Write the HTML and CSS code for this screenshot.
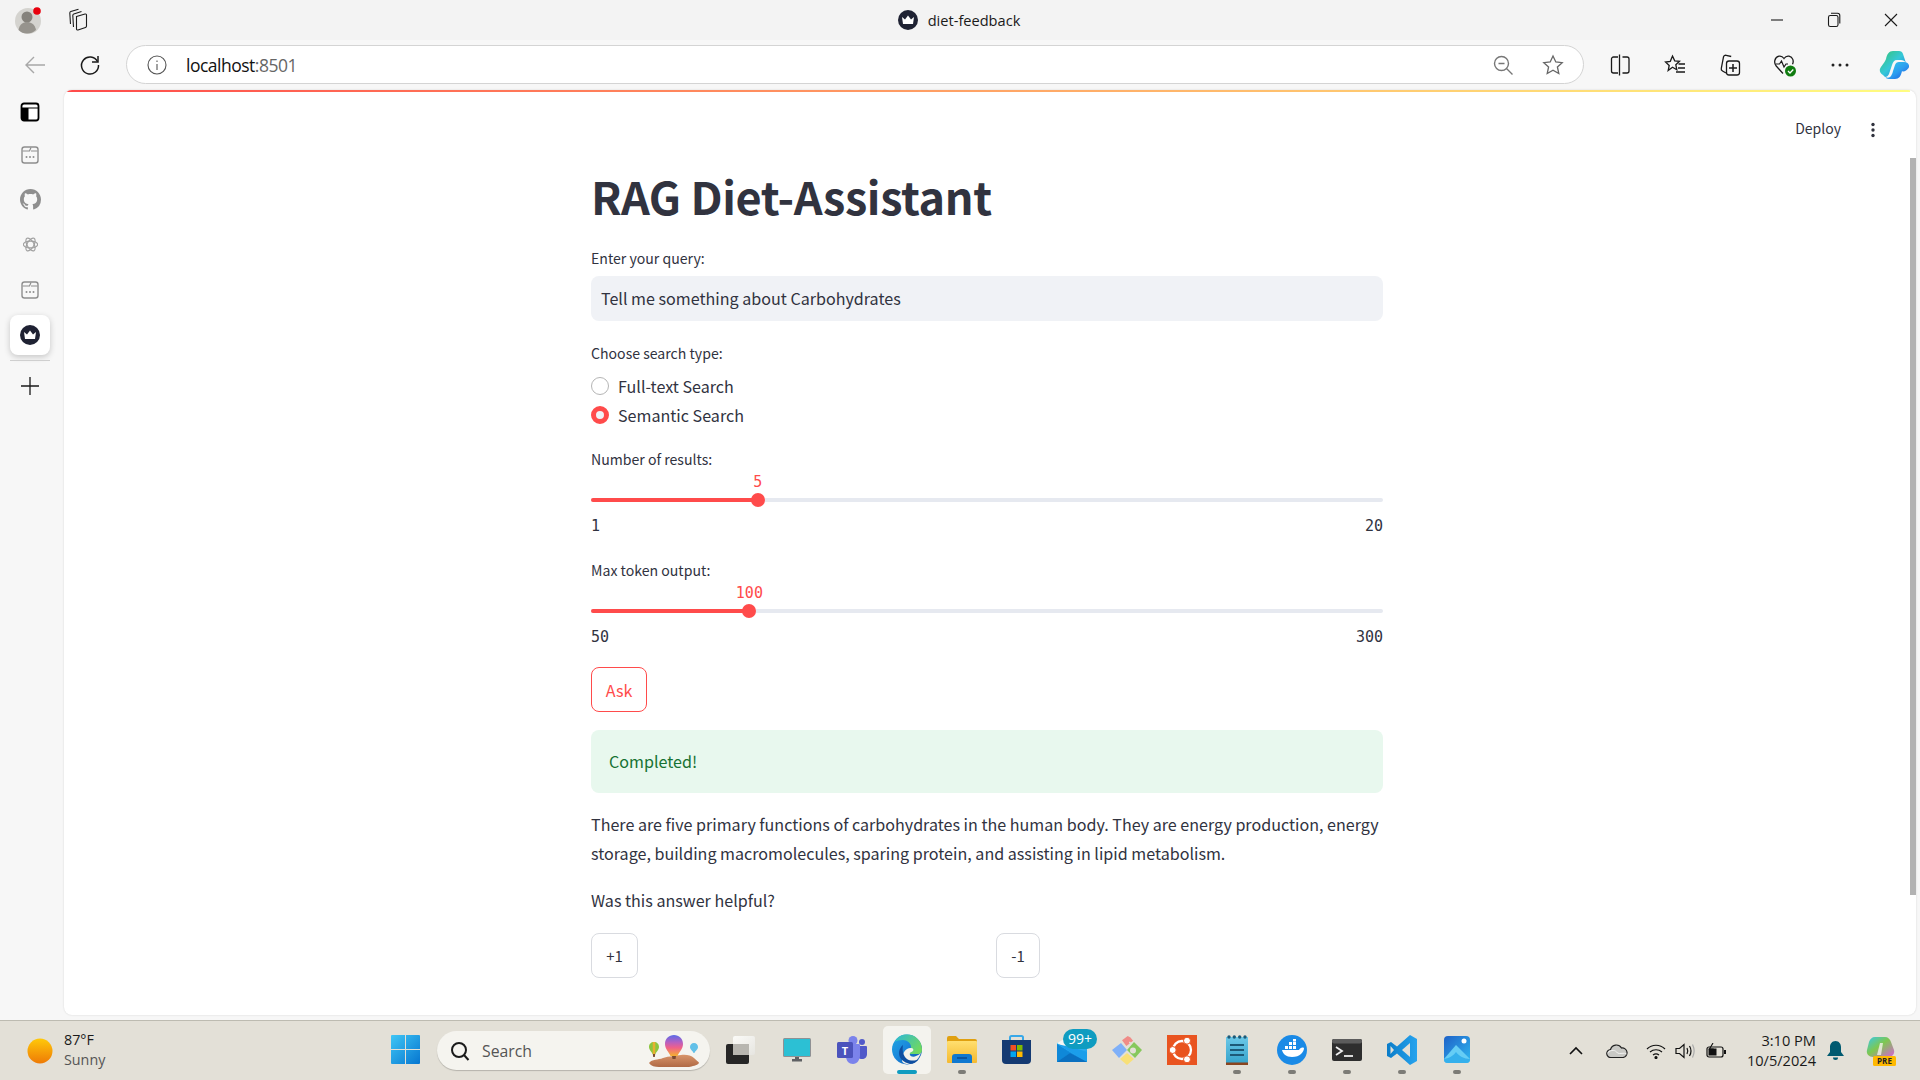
FILE: index.html
```html
<!DOCTYPE html>
<html lang="en">
<head>
<meta charset="utf-8">
<title>diet-feedback</title>
<link rel="stylesheet" href="styles.css">
</head>
<body>
<svg class="defs" width="0" height="0" aria-hidden="true">
  <defs>
    <linearGradient id="gCop" x1="0" y1="0" x2="1" y2="1"><stop offset="0" stop-color="#2fd0e8"/><stop offset=".55" stop-color="#2b9cf0"/><stop offset="1" stop-color="#1b50d8"/></linearGradient>
    <linearGradient id="gCop2" x1="0" y1="0" x2="1" y2="1"><stop offset="0" stop-color="#35c46e"/><stop offset=".5" stop-color="#35c8d8"/><stop offset="1" stop-color="#1d6fe0"/></linearGradient>
    <linearGradient id="gSun" x1="0" y1="0" x2="0" y2="1"><stop offset="0" stop-color="#ffc90a"/><stop offset="1" stop-color="#ee7a06"/></linearGradient>
    <linearGradient id="gWin" x1="0" y1="0" x2="1" y2="1"><stop offset="0" stop-color="#3fc6f5"/><stop offset="1" stop-color="#0676d0"/></linearGradient>
    <linearGradient id="gEdge" x1="0" y1="0" x2="1" y2="1"><stop offset="0" stop-color="#22a8e0"/><stop offset=".45" stop-color="#1a88dc"/><stop offset="1" stop-color="#0c4fa8"/></linearGradient>
    <linearGradient id="gEdge2" x1="0" y1="0" x2="1" y2=".6"><stop offset="0" stop-color="#2cb8d8"/><stop offset="1" stop-color="#6fd860"/></linearGradient>
    <linearGradient id="gFolder" x1="0" y1="0" x2="0" y2="1"><stop offset="0" stop-color="#ffdf70"/><stop offset="1" stop-color="#f5b92f"/></linearGradient>
    <linearGradient id="gMail" x1="0" y1="0" x2="1" y2="1"><stop offset="0" stop-color="#4fd0f8"/><stop offset="1" stop-color="#1a9ae8"/></linearGradient>
    <linearGradient id="gVs" x1="0" y1="0" x2="1" y2="0"><stop offset="0" stop-color="#0a7cc8"/><stop offset="1" stop-color="#27a3ee"/></linearGradient>
    <linearGradient id="gPhoto" x1="0" y1="0" x2="1" y2="1"><stop offset="0" stop-color="#1f62c8"/><stop offset="1" stop-color="#2fb8f0"/></linearGradient>
    <linearGradient id="gPre" x1="0" y1="0" x2="1" y2="1"><stop offset="0" stop-color="#38c8e8"/><stop offset=".45" stop-color="#7ec850"/><stop offset="1" stop-color="#d860d8"/></linearGradient>
    <linearGradient id="gBalloon" x1="0" y1="0" x2="0" y2="1"><stop offset="0" stop-color="#5a6ce8"/><stop offset=".35" stop-color="#b860c0"/><stop offset=".6" stop-color="#f0608a"/><stop offset="1" stop-color="#f4b030"/></linearGradient>
    <linearGradient id="gRock" x1="0" y1="0" x2="0" y2="1"><stop offset="0" stop-color="#d8946a"/><stop offset="1" stop-color="#b06a45"/></linearGradient>
    <linearGradient id="gFront" x1="0" y1="0" x2="1" y2="1"><stop offset="0" stop-color="#fbfbf8"/><stop offset="1" stop-color="#e6e5e0"/></linearGradient>
    <linearGradient id="gNotes" x1="0" y1="0" x2="0" y2="1"><stop offset="0" stop-color="#6cc8e8"/><stop offset="1" stop-color="#36a4cc"/></linearGradient>
    <symbol id="folderTab" viewBox="0 0 20 20"><rect x="2" y="2" width="16" height="16" rx="2.5" fill="none" stroke="#8e8e8e" stroke-width="1.4"/><path d="M2.5 6h7l1.500-3.500M11 6h6.500" fill="none" stroke="#8e8e8e" stroke-width="1.2"/><circle cx="6.500" cy="12" r="1" fill="#8e8e8e"/><circle cx="10" cy="12" r="1" fill="#8e8e8e"/><circle cx="13.500" cy="12" r="1" fill="#8e8e8e"/></symbol>
    <symbol id="crown" viewBox="0 0 20 20"><circle cx="10" cy="10" r="10" fill="#1f2233"/><path d="M4 7l3 2.500L10 5.500l3 4 3-2.500-1 7H5z" fill="#fff"/></symbol>
  </defs>
</svg>

<header class="titlebar">
  <div class="title-left">
    <svg width="26" height="28" viewBox="0 0 26 28"><circle cx="13" cy="15" r="13" fill="#d4d3cf"/><circle cx="12" cy="11" r="5.500" fill="#85827c"/><path d="M3.500 24c1-6 5-8 8.500-8s8 2 9 8c-2.500 2.500-5.500 3.500-9 3.500s-6-1-8.500-3.500z" fill="#96938d"/><circle cx="22" cy="5" r="3.800" fill="#e8000d"/></svg>
    <svg class="tabs-icon" width="22" height="24" viewBox="0 0 22 24" fill="none" stroke="#1c1c1c" stroke-width="1.100"><path d="M10.500 8.500 19 6c.8-.2 1.500.3 1.500 1.100V18c0 .7-.4 1.200-1 1.400L12 22c-.8.200-1.500-.3-1.500-1.100z"/><path d="M7.500 19 6.800 7.500c0-.7.4-1.200 1-1.400L15.500 3.500"/><path d="M4.500 16 3.800 5c0-.7.400-1.200 1-1.400L12.500 1.200"/></svg>
  </div>
  <div class="title-center">
    <svg width="20" height="20"><use href="#crown"/></svg>
    <span>diet-feedback</span>
  </div>
  <div class="window-ctl">
    <svg width="14" height="14" viewBox="0 0 14 14"><path d="M1 7h12" stroke="#1a1a1a" stroke-width="1.100"/></svg>
    <svg width="14" height="16" viewBox="0 0 14 16" fill="none" stroke="#1a1a1a" stroke-width="1.100"><rect x="1.500" y="3.500" width="9.500" height="11" rx="1.800"/><path d="M4 1.300h6.500c1.500 0 2.300.8 2.300 2.300v8"/></svg>
    <svg width="14" height="14" viewBox="0 0 14 14"><path d="M1 1l12 12M13 1 1 13" stroke="#1a1a1a" stroke-width="1.100"/></svg>
  </div>
</header>

<nav class="toolbar">
  <svg class="tb-back" width="22" height="20" viewBox="0 0 22 20" fill="none" stroke="#a8a8a8" stroke-width="1.400"><path d="M21 10H2M10 2l-8 8 8 8"/></svg>
  <svg class="tb-reload" width="22" height="22" viewBox="0 0 22 22" fill="none" stroke="#1a1a1a" stroke-width="1.500"><path d="M18.500 7.500A8.500 8.500 0 1 0 19.500 11"/><path d="M19 2v6h-6"/></svg>
  <div class="address">
    <svg width="20" height="20" viewBox="0 0 20 20" fill="none" stroke="#555" stroke-width="1.100"><circle cx="10" cy="10" r="9"/><path d="M10 9v6M10 5.500v1.500"/></svg>
    <span class="url"><span class="url-host">localhost</span>:8501</span>
    <svg class="addr-zoom" width="20" height="20" viewBox="0 0 20 20" fill="none" stroke="#777" stroke-width="1.400"><circle cx="8.500" cy="8.500" r="7"/><path d="M5.500 8.500h6M13.500 13.500l6 6"/></svg>
    <svg class="addr-star" width="22" height="22" viewBox="0 0 22 22" fill="none" stroke="#666" stroke-width="1.300"><path d="m11 2 2.800 6 6.400.7-4.800 4.300 1.400 6.500L11 16.200 5.200 19.500 6.600 13 1.800 8.700 8.200 8z"/></svg>
  </div>
  <div class="tb-icons">
    <span class="tb-slot"><svg width="20" height="22" viewBox="0 0 20 22" fill="none" stroke="#1a1a1a" stroke-width="1.300"><path d="M8 3H3.500A2 2 0 0 0 1.500 5v12a2 2 0 0 0 2 2H8M12.500 3H17a2 2 0 0 1 2 2v12a2 2 0 0 1-2 2h-4.500"/><path d="M9.500.5v21"/></svg></span>
    <span class="tb-slot"><svg width="22" height="22" viewBox="0 0 22 22" fill="none" stroke="#1a1a1a" stroke-width="1.300"><path d="m8.500 2 2.200 4.800 4.800.5-3.700 3.400 1 5-4.300-2.500L4.200 16.500l1-5L1.500 8l4.800-.7z"/><path d="M14.500 10H21M14 14h7M12 18h9"/></svg></span>
    <span class="tb-slot"><svg width="22" height="24" viewBox="0 0 22 24" fill="none" stroke="#1a1a1a" stroke-width="1.300"><path d="M7 20 3.500 18c-1-.6-1.500-1.600-1.200-2.700L4.500 4c.3-1.300 1.500-2 2.700-1.700l5 1.200"/><rect x="7.500" y="8" width="13" height="14" rx="2.500"/><path d="M14 11v8M10 15h8" stroke-width="1.500"/></svg></span>
    <span class="tb-slot"><svg width="24" height="24" viewBox="0 0 24 24" fill="none"><path d="M10 20.500 3.200 13C.5 10 1.500 4 6 3.200 8 2.800 9.800 3.800 11 5.500c1.200-1.700 3-2.700 5-2.300 4 .8 5 5 3.500 8" stroke="#1a1a1a" stroke-width="1.300"/><path d="M2.500 11h4l2-3 2.500 6 2-3h2" stroke="#1a1a1a" stroke-width="1.200"/><circle cx="17.500" cy="18" r="5.500" fill="#107c10"/><path d="m15 18 2 2 3.300-3.500" stroke="#fff" stroke-width="1.300"/></svg></span>
    <span class="tb-slot"><svg width="18" height="4" viewBox="0 0 18 4" fill="#222"><circle cx="2" cy="2" r="1.500"/><circle cx="9" cy="2" r="1.500"/><circle cx="16" cy="2" r="1.500"/></svg></span>
    <span class="tb-slot tb-slot-last"><svg width="30" height="28" viewBox="0 0 30 28"><path d="M7 8C8 3 10 0 14 0h6c2 0 3.500 1 4 3l3 9c-1-2-3-3-5-3h-4c-3 0-4 2-5 5l-3 9c-1 2-2 3-4 3L4 24C2 23 .5 21 .8 18.500 2 15 5 13 7 8z" fill="url(#gCop2)"/><path d="M23 20c-1 5-3 8-7 8h-6c-2 0-3-.8-3.500-2 2 1 4 1 5.500-1 1-1.500 1.500-3 2-5l2-6c.7-2 2-3 4-3h5c3 0 4.500 1.500 5 3.500.5 2-1 3.500-3 5-1.500 1-3 1.500-4 .5z" fill="url(#gCop)"/></svg></span>
  </div>
</nav>

<div class="middle">
  <aside class="sidebar">
    <span class="side-item side-first"><svg width="20" height="20" viewBox="0 0 20 20"><rect x="1.500" y="1.500" width="17" height="17" rx="2.500" fill="#fff" stroke="#000" stroke-width="1.800"/><path d="M2 5.500h16v1H2zM2 6h6.500v12H2z" fill="#000"/></svg></span>
    <span class="side-item"><svg width="20" height="20"><use href="#folderTab"/></svg></span>
    <span class="side-item"><svg width="21" height="21" viewBox="0 0 16 16"><path fill="#8f8f8f" d="M8 0C3.580 0 0 3.580 0 8c0 3.540 2.290 6.530 5.470 7.590.4.070.55-.17.55-.38v-1.340c-2.230.48-2.700-1.070-2.700-1.070-.36-.92-.89-1.170-.89-1.170-.73-.5.050-.49.050-.49.800.060 1.220.820 1.220.820.710 1.220 1.870.87 2.330.660.070-.52.280-.87.510-1.070-1.780-.2-3.640-.890-3.640-3.950 0-.870.310-1.590.820-2.150-.080-.2-.360-1.020.080-2.120 0 0 .670-.210 2.200.820.640-.180 1.320-.270 2-.270s1.360.090 2 .270c1.530-1.040 2.200-.820 2.200-.820.440 1.100.160 1.920.080 2.120.510.560.820 1.270.820 2.150 0 3.070-1.870 3.750-3.650 3.950.290.250.540.730.540 1.480v2.200c0 .210.150.460.550.380A8.010 8.010 0 0 0 16 8c0-4.420-3.580-8-8-8z"/></svg></span>
    <span class="side-item"><svg width="15" height="15" viewBox="0 0 20 20" fill="none" stroke="#a0a0a0" stroke-width="1.500"><ellipse cx="10" cy="10" rx="9.500" ry="4.500"/><ellipse cx="10" cy="10" rx="9.500" ry="4.500" transform="rotate(60 10 10)"/><ellipse cx="10" cy="10" rx="9.500" ry="4.500" transform="rotate(120 10 10)"/></svg></span>
    <span class="side-item"><svg width="20" height="20"><use href="#folderTab"/></svg></span>
    <span class="side-item side-active"><svg width="20" height="20"><use href="#crown"/></svg></span>
    <span class="side-divider"></span>
    <span class="side-plus"><svg width="20" height="20" viewBox="0 0 20 20"><path d="M10 1v18M1 10h18" stroke="#1a1a1a" stroke-width="1.300"/></svg></span>
  </aside>

  <main class="page">
    <div class="decoration"></div>
    <div class="app-header">
      <span class="deploy">Deploy</span>
      <svg class="app-menu" width="4" height="16" viewBox="0 0 4 16" fill="#31333f"><circle cx="2" cy="2.500" r="1.700"/><circle cx="2" cy="8" r="1.700"/><circle cx="2" cy="13.500" r="1.700"/></svg>
    </div>
    <div class="scrollbar"></div>
    <div class="content">
      <h1 class="app-title">RAG Diet-Assistant</h1>

      <div class="label label-first">Enter your query:</div>
      <div class="text-input">Tell me something about Carbohydrates</div>

      <div class="label label-choose">Choose search type:</div>
      <div class="radios">
        <div class="radio"><span class="radio-dot"></span>Full-text Search</div>
        <div class="radio"><span class="radio-dot radio-on"></span>Semantic Search</div>
      </div>

      <div class="label label-num">Number of results:</div>
      <div class="slider">
        <div class="slider-value" style="left:21.05%">5</div>
        <div class="slider-track"><div class="slider-fill" style="width:21.05%"></div><div class="slider-thumb" style="left:21.05%"></div></div>
        <div class="slider-range"><span>1</span><span>20</span></div>
      </div>

      <div class="label label-max">Max token output:</div>
      <div class="slider">
        <div class="slider-value" style="left:20%">100</div>
        <div class="slider-track"><div class="slider-fill" style="width:20%"></div><div class="slider-thumb" style="left:20%"></div></div>
        <div class="slider-range"><span>50</span><span>300</span></div>
      </div>

      <button class="btn-ask">Ask</button>
      <div class="alert">Completed!</div>
      <p class="answer">There are five primary functions of carbohydrates in the human body. They are energy production, energy storage, building macromolecules, sparing protein, and assisting in lipid metabolism.</p>
      <p class="helpful">Was this answer helpful?</p>
      <div class="feedback">
        <div><button class="btn-fb btn-plus">+1</button></div>
        <div><button class="btn-fb btn-minus">-1</button></div>
      </div>
    </div>
  </main>
</div>

<footer class="taskbar">
  <div class="weather">
    <svg width="26" height="26" viewBox="0 0 26 26"><circle cx="13" cy="13" r="12.500" fill="url(#gSun)"/></svg>
    <div class="weather-text"><div class="w-temp">87°F</div><div class="w-desc">Sunny</div></div>
  </div>
  <span class="slot slot-start"><svg width="29" height="29" viewBox="0 0 29 29"><path d="M0 1a1 1 0 0 1 1-1h13v14H0zM15 0h13a1 1 0 0 1 1 1v13H15zM0 15h14v14H1a1 1 0 0 1-1-1zM15 15h14v13a1 1 0 0 1-1 1H15z" fill="url(#gWin)"/></svg></span>
  <div class="search">
    <svg width="20" height="20" viewBox="0 0 20 20" fill="none" stroke="#1a1a1a" stroke-width="2"><circle cx="9" cy="9" r="7"/><path d="m14 14 4.500 5"/></svg>
    <span class="search-text">Search</span>
    <svg class="balloons" width="54" height="33" viewBox="0 0 54 33">
      <path d="M2 29c3-4 9-3 14-5 6-2 12-2 18-3 5-.5 10 0 13 3 2 2 5 4 5 5-2 3-7 3-10 4H12C8 33 4 32 2 29z" fill="url(#gRock)"/>
      <path d="M27 1c5 0 9 3.500 9 9 0 5-4 8-5.500 12h-7C22 18 18 15 18 10c0-5.500 4-9 9-9z" fill="url(#gBalloon)"/>
      <path d="M25 22h4l-.5 3h-3z" fill="#7a4a30"/>
      <path d="M7 8c3 0 5 2 5 5 0 3-3 5-3.500 7h-3C5 18 2 16 2 13c0-3 2-5 5-5z" fill="#8cc63f"/>
      <path d="M7 8v12" stroke="#e8b030" stroke-width="2.500"/>
      <path d="M5.800 20h2.400l-.4 3H6.200z" fill="#7a4a30"/>
      <path d="M47 9c2.500 0 4 2 4 4 0 2.500-3 4-3.500 6h-1c-.5-2-3.500-3.500-3.500-6 0-2 1.500-4 4-4z" fill="#62c0e8"/>
    </svg>
  </div>
  <span class="slot slot-task"><svg width="29" height="28" viewBox="0 0 29 28"><rect y="8" width="23" height="20" rx="2" fill="#262626"/><rect x="7" width="22" height="19" rx="2" fill="url(#gFront)"/><rect x="7" y="8" width="16" height="11" fill="#b8b6b0"/></svg></span>
  <span class="slot"><svg width="28" height="24" viewBox="0 0 28 24"><rect width="28" height="19" rx="1.500" fill="#8f9194"/><rect x="1" y="1" width="26" height="17" fill="#2cc0d4"/><path d="M12 19h4v2h-4zM9 21h10v2.500H9z" fill="#5f6164"/></svg></span>
  <span class="slot"><svg width="30" height="28" viewBox="0 0 30 28"><circle cx="25" cy="6" r="3" fill="#5059c9"/><path d="M20 10h9a1 1 0 0 1 1 1v7c0 3-2 5-5 5s-5-2-5-5z" fill="#5059c9"/><circle cx="16" cy="4.500" r="4.500" fill="#7b83eb"/><path d="M9 8h13a1 1 0 0 1 1 1v10c0 5-3 9-7 9s-7-3-7-8z" fill="#7b83eb"/><rect y="6" width="16" height="16" rx="1.500" fill="#4b53bc"/><text class="teams-t" x="8" y="18.500" text-anchor="middle">T</text></svg></span>
  <span class="slot slot-active"><svg width="30" height="31" viewBox="0 0 30 31"><circle cx="15" cy="15.500" r="15" fill="url(#gEdge)"/><path d="M3 7C6 2 10 .5 15 .5c8 0 15 6 15 15 0 3-1 4-3 4.500H16c-1-3 3-4 3-7 0-4-4-7-8-7-4 0-6 1-8 1.500z" fill="url(#gEdge2)"/><path d="M29 19c-3 7-7 11-13 11-4 0-5-1-6-3 .5-7 2-12 8-13 3-.5 4 1 3 3-1 1-4 1-3 4 1 2 5 3 11-2z" fill="#f3f1ea"/><path d="M11 11c-4 3-6 10-1 15 2 2 5 3 8 4 3 0 7-2 9-5-4 2-9 2-12 0-4-3-5-9-4-14z" fill="#0e4ea0"/></svg><i class="run run-blue"></i></span>
  <span class="slot"><svg width="30" height="27" viewBox="0 0 30 27"><path d="M0 2a2 2 0 0 1 2-2h7l3 3h16a2 2 0 0 1 2 2v3H0z" fill="#e0a010"/><rect y="5" width="30" height="22" rx="1" fill="url(#gFolder)"/><path d="M5 27v-6a3 3 0 0 1 3-3h14a3 3 0 0 1 3 3v6z" fill="#0f78d0"/><path d="M10 22h10" stroke="#0a4a90" stroke-width="1.500"/></svg><i class="run"></i></span>
  <span class="slot"><svg width="29" height="29" viewBox="0 0 29 29"><path d="M8 6V2.500A1.500 1.500 0 0 1 9.500 1h10A1.500 1.500 0 0 1 21 2.500V6" fill="none" stroke="#38a8e8" stroke-width="2"/><path d="M0 5h29v20a4 4 0 0 1-4 4H4a4 4 0 0 1-4-4z" fill="#143a72"/><path d="M8.500 10h5.500v5.500H8.500z" fill="#f25022"/><path d="M15 10h5.500v5.500H15z" fill="#7fba00"/><path d="M8.500 16.500h5.500V22H8.500z" fill="#00a4ef"/><path d="M15 16.500h5.500V22H15z" fill="#ffb900"/></svg></span>
  <span class="slot slot-mail"><svg width="30" height="24" viewBox="0 0 30 24"><path d="M0 5 12 0l18 5v19H0z" fill="url(#gMail)"/><path d="M0 5 8 .5 24 7l-6 9z" fill="#f6f6f4"/><path d="M0 6v18h30z" fill="#1590e0"/><path d="M0 6l30 18V14L18 10z" fill="#1b9eea"/><path d="M0 24V6l13 9z" fill="#0f88d8"/><path d="M0 24l13-9 17 9z" fill="#0a70c0"/></svg><span class="badge">99+</span></span>
  <span class="slot"><svg width="30" height="30" viewBox="0 0 30 30"><path d="m15 1-5 5 5 5 3-3-1-1 1-1 1 1 2-2-3-3z" fill="#f08c88" transform="rotate(8 15 6)"/><path d="m9 8-9 7 7 8 8-8z" fill="#7fb0f8"/><path d="m22 7 8 8-7 8-8-8z" fill="#86c85c"/><circle cx="21" cy="15.500" r="3" fill="#e3e0d7"/><path d="m15 18 7 6-7 6-7-6z" fill="#f8e078"/></svg></span>
  <span class="slot"><svg width="30" height="30" viewBox="0 0 30 30"><rect width="30" height="30" fill="#e95420"/><circle cx="15" cy="15" r="9" fill="none" stroke="#fff" stroke-width="2.300"/><circle cx="20" cy="5.700" r="3.500" fill="#fff" stroke="#e95420"/><circle cx="5.700" cy="15" r="3.500" fill="#fff" stroke="#e95420"/><circle cx="20" cy="24.300" r="3.500" fill="#fff" stroke="#e95420"/></svg></span>
  <span class="slot"><svg width="22" height="30" viewBox="0 0 22 30"><rect y="2" width="22" height="26" fill="url(#gNotes)"/><rect y="27.500" width="22" height="2.500" fill="#8a4520"/><g fill="#1d5a78"><circle cx="3" cy="2" r="1.700"/><circle cx="8.300" cy="2" r="1.700"/><circle cx="13.700" cy="2" r="1.700"/><circle cx="19" cy="2" r="1.700"/><path d="M4 9h14v2H4zM4 14h14v2H4zM4 19h14v2H4z"/></g></svg><i class="run"></i></span>
  <span class="slot"><svg width="30" height="30" viewBox="0 0 30 30"><circle cx="15" cy="15" r="15" fill="#1a8ae6"/><path d="M5 15h17c1-2 3-3 5-2 0 4-4 9-12 9-6 0-9-3-10-7z" fill="#fff"/><path d="M8 11h3v3H8zM12 11h3v3h-3zM16 11h3v3h-3zM12 7h3v3h-3zM16 7h3v3h-3zM16 4h3v2.500h-3z" fill="#fff"/></svg><i class="run"></i></span>
  <span class="slot"><svg width="30" height="22" viewBox="0 0 30 22"><rect width="30" height="22" rx="2" fill="#2e2e2e"/><rect width="30" height="4.500" rx="2" fill="#5c5c5c"/><path d="m4 8 6 4-6 4" fill="none" stroke="#f0f0f0" stroke-width="1.800"/><path d="M12 17h9" stroke="#f0f0f0" stroke-width="1.800"/></svg><i class="run"></i></span>
  <span class="slot"><svg width="30" height="30" viewBox="0 0 30 30"><path d="M30 4v22l-7 4-13-11.500-6 4.500-4-2V9l4-2 6 4.500L23 0z" fill="url(#gVs)"/><path d="m23 8-8 7 8 7z" fill="#e3e0d7"/><path d="m3.500 11 3.500 4-3.500 4z" fill="#e3e0d7"/></svg><i class="run"></i></span>
  <span class="slot"><svg width="26" height="27" viewBox="0 0 26 27"><rect width="26" height="27" rx="4" fill="url(#gPhoto)"/><circle cx="20" cy="5" r="2.500" fill="#fff"/><path d="M0 23 12 9l14 14v0a4 4 0 0 1-4 4H4a4 4 0 0 1-4-4z" fill="#65cdf5"/><path d="M0 23c6-1 10-4 12-7 3 4 8 7 14 7a4 4 0 0 1-4 4H4a4 4 0 0 1-4-4z" fill="#35b0ec"/></svg><i class="run"></i></span>

  <span class="tray-icon tray-chevron"><svg width="14" height="9" viewBox="0 0 14 9" fill="none" stroke="#111" stroke-width="1.600"><path d="m1 8 6-6 6 6"/></svg></span>
  <span class="tray-icon tray-cloud"><svg width="22" height="15" viewBox="0 0 22 15"><path d="M5 14.500a4 4 0 0 1-.5-8A6 6 0 0 1 15.500 5a4.800 4.800 0 0 1 1.500 9.500z" fill="#c9c9c5" stroke="#222" stroke-width="1.200"/><path d="M1.500 10c4-4 8-3 10 0 2 1.500 7-1 9 1" fill="none" stroke="#f2f2f0" stroke-width="1"/></svg></span>
  <span class="tray-icon tray-wifi"><svg width="20" height="16" viewBox="0 0 20 16" fill="none" stroke="#111" stroke-width="1.200"><path d="M1 6c5-5 13-5 18 0M4 9c3.500-3 8.500-3 12 0M7 12c2-1.500 4-1.500 6 0"/><circle cx="10" cy="14.500" r="1" fill="#111"/></svg></span>
  <span class="tray-icon tray-speaker"><svg width="20" height="16" viewBox="0 0 20 16" fill="none" stroke="#111" stroke-width="1.200"><path d="M1 5.500h3.500L9 1.500v13L4.500 10.500H1z"/><path d="M12 5c1 2 1 4 0 6M14.500 3c1.800 3 1.800 7 0 10"/><path d="M17.500 1.500c2 4 2 9 0 13" stroke="#aaa"/></svg></span>
  <span class="tray-icon tray-battery"><svg width="20" height="16" viewBox="0 0 20 16"><rect x="1" y="4" width="16" height="10" rx="2" fill="none" stroke="#111" stroke-width="1.200"/><rect x="2.500" y="5.500" width="8" height="7" fill="#111"/><path d="M18 7h2v4h-2z" fill="#111"/><path d="M7 0 3.500 6H7L5.500 10" fill="none" stroke="#111" stroke-width="1.100"/></svg></span>
  <div class="clock"><div>3:10 PM</div><div>10/5/2024</div></div>
  <span class="tray-icon tray-bell"><svg width="17" height="20" viewBox="0 0 17 20"><path d="M8.500 0C5 0 3 3 3 6v5l-3 4h17l-3-4V6c0-3-2-6-5.500-6z" fill="#005a70"/><path d="M6 16.500h5a2.500 2.500 0 0 1-5 0z" fill="#005a70"/></svg></span>
  <span class="tray-icon tray-copilot"><svg width="30" height="30" viewBox="0 0 30 30"><path d="M9 1h10c3 0 5 2 6 5l3 8c1 4-2 7-5 7H7c-4 0-7-3-6-7l2-8c1-3 3-5 6-5z" fill="url(#gPre)"/><path d="M14 7h3l-2 12h-4z" fill="#f3f1ea" opacity=".8"/><rect x="7" y="20" width="23" height="10" rx="1.500" fill="#ffb900"/><text class="pre" x="18.500" y="28" text-anchor="middle">PRE</text></svg></span>
</footer>
</body>
</html>
```

FILE: styles.css
```css
* { box-sizing: border-box; }
html, body { margin: 0; padding: 0; }
body {
  width: 1920px;
  height: 1080px;
  overflow: hidden;
  display: flex;
  flex-direction: column;
  background: #f7f7f7;
  font-family: "Noto Sans CJK SC", "Noto Sans", sans-serif;
  color: #31333f;
}
.defs { position: absolute; }
svg { display: block; flex: none; }

/* window title bar */
.titlebar {
  height: 40px;
  flex: none;
  background: #f3f3f3;
  display: grid;
  grid-template-columns: 1fr auto 1fr;
  align-items: center;
}
.title-left { display: flex; align-items: center; padding-left: 15px; }
.tabs-icon { margin-left: 25px; }
.title-center {
  display: flex; align-items: center; gap: 10px;
  font-family: "Open Sans", sans-serif; font-size: 14.600px; color: #1a1a1a;
  padding-right: 2px;
}
.window-ctl { display: flex; align-items: center; justify-content: flex-end; gap: 43px; padding-right: 22px; }

/* browser toolbar */
.toolbar {
  height: 50px;
  flex: none;
  background: #f7f7f7;
  display: flex;
  align-items: center;
  padding: 0 0 1px 24px;
}
.tb-reload { margin-left: 33px; }
.address {
  width: 1458px; height: 39px; margin-left: 25px; flex: none;
  background: #fff; border: 1.500px solid #d4d4d4; border-radius: 20px;
  display: flex; align-items: center; padding-left: 20px;
}
.url {
  margin-left: 19px; font-family: "Open Sans", sans-serif; font-size: 17.500px;
  letter-spacing: -.5px; color: #666;
}
.url-host { color: #111; }
.addr-zoom { margin-left: auto; }
.addr-star { margin-left: 29px; margin-right: 19px; }
.tb-icons { display: flex; align-items: center; margin-left: 8px; flex: none; }
.tb-slot { width: 55px; flex: none; display: flex; justify-content: center; align-items: center; }
.tb-slot-last { width: 53px; }

/* middle */
.middle { height: 930px; flex: none; display: flex; align-items: flex-start; }
.sidebar {
  width: 64px; flex: none; display: flex; flex-direction: column; align-items: center;
  margin-top: -1px; padding-right: 4px;
}
.side-item { height: 45px; width: 40px; display: flex; align-items: center; justify-content: center; }
.side-first { margin-bottom: -2px; }
.side-active { height: 40px; margin-top: 3px; background: #fff; border-radius: 8px; box-shadow: 0 2px 6px rgba(0,0,0,.2); }
.side-divider { width: 40px; height: 1px; background: #cfcfcf; margin-top: 5px; }
.side-plus { margin-top: 15px; }

.page {
  position: relative;
  width: 1852px; height: 925px; flex: none;
  background: #fff; border-radius: 8px; overflow: hidden;
  box-shadow: 0 0 2px rgba(0,0,0,.15);
  padding-right: 6px;
}
.decoration { height: 2px; background: linear-gradient(90deg, #ff4b4b, #fffd80); }
.app-header {
  height: 74px; display: flex; justify-content: flex-end; align-items: flex-start;
  gap: 30px; padding: 28px 35px 0 0; line-height: 16px;
}
.app-menu { margin-top: 2px; }
.deploy { font-size: 14px; }
.scrollbar { position: absolute; right: 0; top: 68px; width: 6px; height: 737px; background: #b2b2b2; }

.content { width: 792px; margin: 0 auto; }
.app-title { margin: 0; font-size: 45px; line-height: 60px; font-weight: 700; letter-spacing: -.4px; }
.label { font-size: 14.100px; line-height: 20px; }
.label-first { margin-top: 22px; }
.label-choose { margin-top: 22px; }
.label-num { margin-top: 20px; }
.label-max { margin-top: 26px; }
.text-input {
  margin-top: 8px; height: 45px; background: #f0f2f6; border-radius: 8px;
  padding-left: 10px; font-size: 16.100px; line-height: 45px;
}
.radios { margin-top: 8px; }
.radio { height: 29px; display: flex; align-items: center; gap: 9px; font-size: 16.100px; }
.radio-dot { width: 18px; height: 18px; border-radius: 50%; border: 1px solid #b5b5b5; background: #fff; flex: none; }
.radio-on { background: #f0f2f6; border: 5.500px solid #ff4b4b; }

.slider { position: relative; padding-top: 21px; }
.slider-value {
  position: absolute; top: 5px; height: 16px; line-height: 16px;
  transform: translateX(-50%);
  font-family: "DejaVu Sans Mono", monospace; font-size: 15px; color: #ff4b4b;
}
.slider-track { position: relative; height: 20px; }
.slider-track::before { content: ""; position: absolute; left: 0; right: 0; top: 8px; height: 4px; border-radius: 2px; background: #e6e9f0; }
.slider-fill { position: absolute; left: 0; top: 8px; height: 4px; border-radius: 2px; background: #ff4b4b; }
.slider-thumb { position: absolute; top: 3px; width: 14px; height: 14px; margin-left: -7px; border-radius: 50%; background: #ff4b4b; }
.slider-range {
  display: flex; justify-content: space-between; margin-top: 8px; height: 16px; line-height: 16px;
  font-family: "DejaVu Sans Mono", monospace; font-size: 15px; color: #31333f;
}
.btn-ask {
  display: block; margin-top: 22px; width: 56px; height: 45px; padding: 0;
  background: #fff; border: 1px solid #ff4b4b; border-radius: 8px;
  color: #ff4b4b; font-family: inherit; font-size: 16.100px;
}
.alert {
  margin-top: 18px; height: 63px; padding-left: 18px; background: #e8f8ee; border-radius: 8px;
  color: #177233; font-size: 16.100px; line-height: 63px;
}
.answer { margin: 17px 0 0; font-size: 16.100px; line-height: 29px; }
.helpful { margin: 18px 0 0; font-size: 16.100px; line-height: 29px; }
.feedback { margin-top: 18px; display: grid; grid-template-columns: 1fr 1fr; column-gap: 18px; }
.btn-fb {
  display: block; height: 45px; padding: 0; background: #fff; border: 1px solid #d9dbe0; border-radius: 8px;
  color: #31333f; font-family: inherit; font-size: 15px;
}
.btn-plus { width: 47px; }
.btn-minus { width: 44px; }

/* taskbar */
.taskbar {
  height: 60px; flex: none; background: #e3e0d7; border-top: 1px solid #bdbbb1;
  display: flex; align-items: center; font-family: "Open Sans", sans-serif;
}
.weather { width: 378px; padding-left: 27px; display: flex; align-items: center; gap: 11px; flex: none; }
.weather-text { font-size: 14.300px; line-height: 19.500px; padding-bottom: 2px; }
.w-temp { color: #1a1a1a; }
.w-desc { color: #555; }
.slot { position: relative; width: 55px; height: 100%; flex: none; display: flex; align-items: center; justify-content: center; padding-bottom: 2px; }
.slot-task { width: 59px; padding-left: 1px; }
.slot-active::before { content: ""; position: absolute; left: 4px; right: 3px; top: 5px; bottom: 6px; background: #f4f3ee; border-radius: 5px; }
.slot-active svg { position: relative; }
.run { position: absolute; bottom: 6px; left: 50%; width: 8px; height: 4px; margin-left: -4px; border-radius: 2px; background: #7c7b76; }
.run-blue { width: 20px; margin-left: -10px; background: #0f9cc0; }
.search {
  margin-left: 4px; width: 273px; height: 39px; flex: none; background: #f5f4ef; border-radius: 20px;
  display: flex; align-items: center; padding-left: 13px; box-shadow: 0 1px 1px rgba(0,0,0,.2);
}
.search-text { margin-left: 12px; font-size: 15.800px; color: #555; }
.balloons { margin-left: auto; margin-right: 9px; }
.slot-mail .badge {
  position: absolute; left: 19px; top: 8px; width: 34px; height: 20px; border-radius: 10px;
  background: #0f9cc0; color: #fff; font-size: 14px; line-height: 20px; text-align: center;
}
.teams-t { fill: #fff; font-family: "Open Sans", sans-serif; font-size: 11px; font-weight: 700; }
.pre { fill: #222; font-family: "Open Sans", sans-serif; font-size: 8px; font-weight: 700; }
.tray-icon { display: flex; align-items: center; justify-content: center; flex: none; }
.tray-chevron { width: 24px; margin-left: 80px; }
.tray-cloud { width: 28px; margin-left: 15px; }
.tray-wifi { width: 24px; margin-left: 13px; }
.tray-speaker { width: 24px; margin-left: 5px; }
.tray-battery { width: 24px; margin-left: 7px; }
.clock { width: 88px; flex: none; text-align: right; font-size: 14.600px; line-height: 20px; color: #1a1a1a; padding-bottom: 2px; }
.tray-bell { width: 20px; margin-left: 9px; }
.tray-copilot { width: 30px; margin-left: 21px; }
```
